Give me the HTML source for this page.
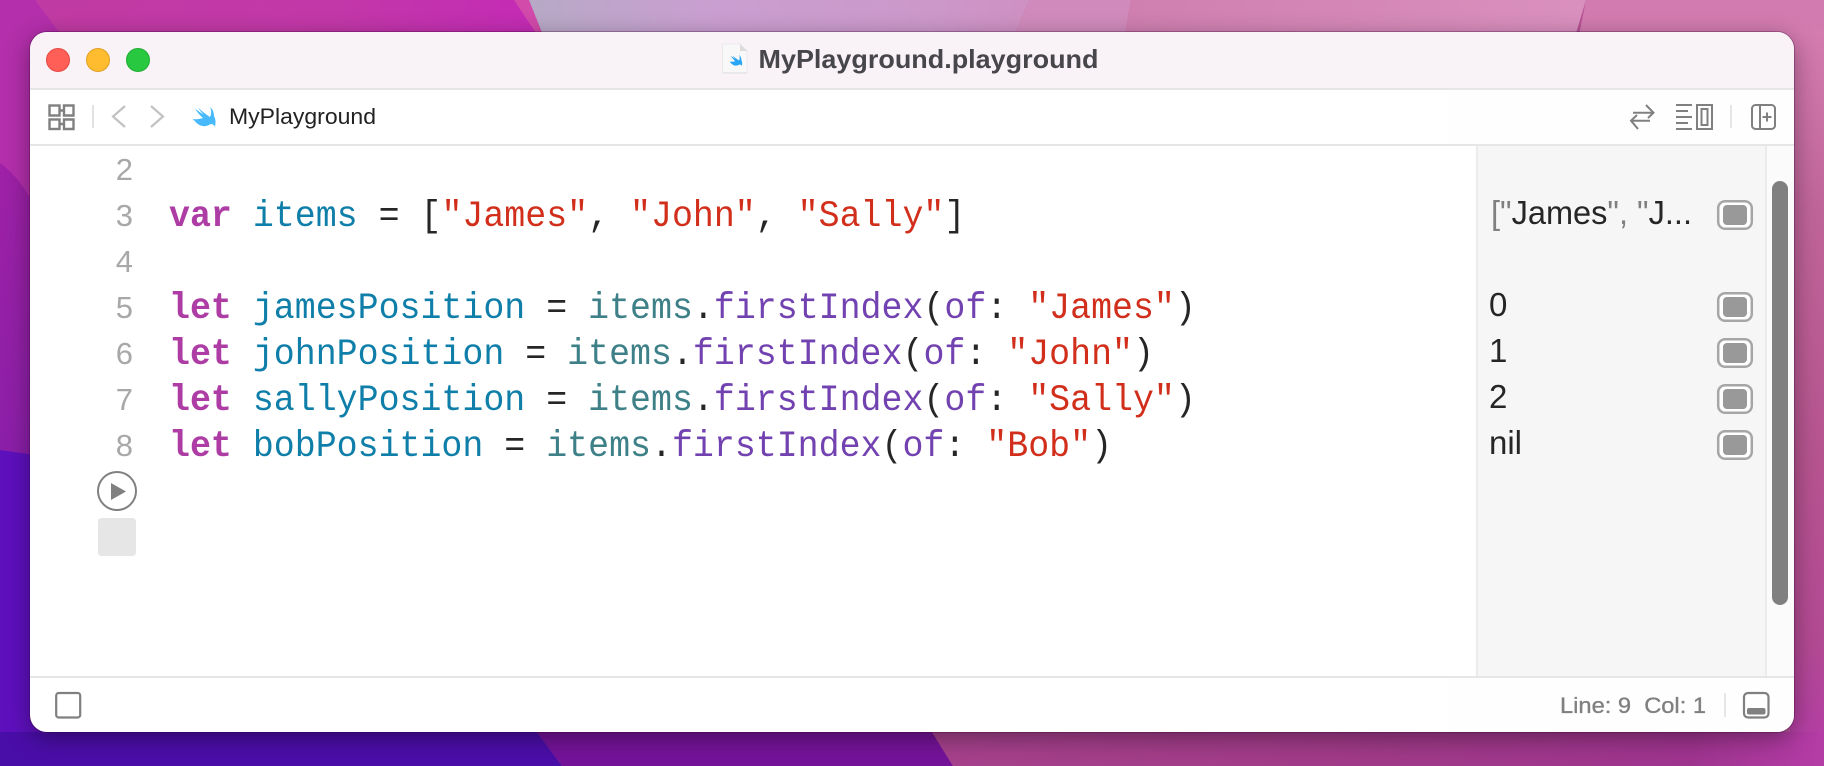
<!DOCTYPE html>
<html><head><meta charset="utf-8"><style>
html,body{margin:0;padding:0;width:1824px;height:766px;overflow:hidden;background:#8a2a90}
svg{position:absolute;left:0;top:0}
#win{position:absolute;left:30px;top:32px;width:1764px;height:700px;border-radius:17px;overflow:hidden;background:#fff;box-shadow:0 0 0 1px rgba(60,0,60,.3),0 6px 24px rgba(0,0,0,.38)}
#win div{position:absolute}
.k{fill:#ad3da4;font-weight:bold}.v{fill:#0f7fa9}.r{fill:#3e8087}.m{fill:#7242b0}.s{fill:#d12f1b}
</style></head><body>
<svg width="1824" height="766" viewBox="0 0 1824 766">
<defs>
<linearGradient id="a" x1="0" x2="1" y1="0" y2="0"><stop offset="0" stop-color="#c03ba2"/><stop offset=".6" stop-color="#c238a8"/><stop offset="1" stop-color="#c42ab6"/></linearGradient>
<linearGradient id="b" x1="0" x2="1" y1="0" y2="0"><stop offset="0" stop-color="#b7a9c6"/><stop offset=".35" stop-color="#c99fd0"/><stop offset=".8" stop-color="#cc98ca"/><stop offset="1" stop-color="#cf90c2"/></linearGradient>
<linearGradient id="c" x1="0" x2="0" y1="0" y2="1"><stop offset="0" stop-color="#9e21a6"/><stop offset="1" stop-color="#8a1fa8"/></linearGradient>
<linearGradient id="d" x1="0" x2="0" y1="0" y2="1"><stop offset="0" stop-color="#d47cb0"/><stop offset=".25" stop-color="#c0659a"/><stop offset=".6" stop-color="#b65490"/><stop offset=".85" stop-color="#b34a93"/><stop offset="1" stop-color="#b43da6"/></linearGradient>
<linearGradient id="e" x1="0" x2="1" y1="0" y2="0"><stop offset="0" stop-color="#a6418c"/><stop offset=".5" stop-color="#a03a88"/><stop offset=".85" stop-color="#9f348f"/><stop offset="1" stop-color="#b43ca6"/></linearGradient>
<linearGradient id="f" x1="0" x2="1" y1="0" y2="0"><stop offset="0" stop-color="#cf7fb0"/><stop offset="1" stop-color="#da90be"/></linearGradient>
</defs>
<rect width="1824" height="766" fill="#b55295"/>
<polygon points="0,0 520,0 550,40 550,300 0,300" fill="url(#a)"/>
<polygon points="0,0 35,0 62,36 62,210 0,210" fill="#b32fab"/>
<polygon points="514,0 529,0 545,36 538,36" fill="#d24aaa"/>
<polygon points="529,0 1030,0 1012,40 545,40" fill="url(#b)"/>
<polygon points="1030,0 1131,0 1124,40 1012,40" fill="#d08bbc"/>
<polygon points="1131,0 1586,0 1574,40 1124,40" fill="url(#f)"/>
<polygon points="1586,0 1824,0 1824,60 1574,60" fill="#d27bb0"/>
<rect x="1790" y="30" width="34" height="720" fill="url(#d)"/>
<path d="M0 163C10 170 22 183 30 198L70 198V470H0Z" fill="url(#c)"/>
<polygon points="0,450 70,460 70,766 0,766" fill="#5e10bd"/>
<polygon points="0,732 537,732 562,766 0,766" fill="#4a0ea8"/>
<polygon points="537,732 932,732 953,766 562,766" fill="#741399"/>
<polygon points="932,732 1824,732 1824,766 953,766" fill="url(#e)"/>
</svg>

<div id="win">
<div style="left:0;top:0;width:1764px;height:56px;background:#f9f3f8"></div>
<div style="left:0;top:56px;width:1764px;height:2px;background:#e6e5e7"></div>
<div style="left:1417px;top:58px;width:347px;height:54px;background:#fefefe"></div>
<div style="left:0;top:112px;width:1764px;height:2px;background:#e6e6e8"></div>
<div style="left:1446px;top:114px;width:290px;height:532px;background:#f6f6f6"></div>
<div style="left:1446px;top:114px;width:2px;height:532px;background:#ebebeb"></div>
<div style="left:1735px;top:114px;width:2px;height:532px;background:#ebebeb"></div>
<div style="left:1737px;top:114px;width:27px;height:532px;background:#fbfbfb"></div>
<div style="left:1742px;top:149px;width:16px;height:424px;border-radius:8px;background:#808080"></div>
<div style="left:0;top:644px;width:1764px;height:2px;background:#e6e6e6"></div>
<div style="left:1417px;top:646px;width:347px;height:54px;background:#fefefe"></div>
</div>

<svg width="1824" height="766" viewBox="0 0 1824 766" font-family="'Liberation Sans',sans-serif">
<!-- code -->
<g font-family="'Liberation Mono',monospace" font-size="37" fill="#262626">
<text transform="translate(169,226) scale(.944,1)"><tspan class="k">var</tspan> <tspan class="v">items</tspan> = [<tspan class="s">"James"</tspan>, <tspan class="s">"John"</tspan>, <tspan class="s">"Sally"</tspan>]</text>
<text transform="translate(169,318) scale(.944,1)"><tspan class="k">let</tspan> <tspan class="v">jamesPosition</tspan> = <tspan class="r">items</tspan>.<tspan class="m">firstIndex</tspan>(<tspan class="m">of</tspan>: <tspan class="s">"James"</tspan>)</text>
<text transform="translate(169,364) scale(.944,1)"><tspan class="k">let</tspan> <tspan class="v">johnPosition</tspan> = <tspan class="r">items</tspan>.<tspan class="m">firstIndex</tspan>(<tspan class="m">of</tspan>: <tspan class="s">"John"</tspan>)</text>
<text transform="translate(169,410) scale(.944,1)"><tspan class="k">let</tspan> <tspan class="v">sallyPosition</tspan> = <tspan class="r">items</tspan>.<tspan class="m">firstIndex</tspan>(<tspan class="m">of</tspan>: <tspan class="s">"Sally"</tspan>)</text>
<text transform="translate(169,456) scale(.944,1)"><tspan class="k">let</tspan> <tspan class="v">bobPosition</tspan> = <tspan class="r">items</tspan>.<tspan class="m">firstIndex</tspan>(<tspan class="m">of</tspan>: <tspan class="s">"Bob"</tspan>)</text>
</g>
<!-- traffic lights -->
<circle cx="58" cy="60" r="11.5" fill="#ff5f57" stroke="#e5483f" stroke-width="1"/>
<circle cx="98" cy="60" r="11.5" fill="#febc2e" stroke="#e0a025" stroke-width="1"/>
<circle cx="138" cy="60" r="11.5" fill="#28c840" stroke="#20ad32" stroke-width="1"/>
<!-- document icon -->
<path d="M723 45H740L747 52V73.500H723Z" fill="#dcdcdc"/>
<path d="M722.500 44H740L747 51V72.500H722.500Z" fill="#f8f8f8" stroke="#e6e6e6" stroke-width=".8"/>
<path d="M740 44V51H747Z" fill="#dcdcdc"/>
<path transform="translate(621.500,-5) scale(.56)" d="M193 119C197 124 201 127 206 126C208 125.700 209.500 124.500 211 124C212.500 124 214 125 215 126.500C216 122 215.500 118.500 214 116C214 112 212.500 109 210 107C211.500 110 211.500 114 210 117C206 114.500 201 110.500 198 107.500C199.500 110 201.500 112.500 203.500 114.500C201 113 197.500 110.500 195 108.500C197 112 200 115.500 203 118C200 119 196 119.500 193 119Z" fill="#29a5f5"/>
<text x="758.500" y="68" font-size="26" font-weight="bold" fill="#47464a" textLength="340" lengthAdjust="spacingAndGlyphs">MyPlayground.playground</text>
<!-- grid icon -->
<g fill="none" stroke="#808080" stroke-width="2.400">
<rect x="49.500" y="105.500" width="10" height="10"/>
<path d="M64 110.500H60M64 105.500H73.500V115.500H64Z"/>
<rect x="49.500" y="119.500" width="10" height="9.500"/>
<path d="M64 124H60M64 119.500H73.500V129H64Z"/>
</g>
<rect x="92" y="105" width="2" height="23" fill="#e2e2e2"/>
<path d="M125 106L113 116.500L125 127" fill="none" stroke="#c2c2c2" stroke-width="2.200"/>
<path d="M151 106L163 116.500L151 127" fill="none" stroke="#c2c2c2" stroke-width="2.200"/>
<path d="M193 119C197 124 201 127 206 126C208 125.700 209.500 124.500 211 124C212.500 124 214 125 215 126.500C216 122 215.500 118.500 214 116C214 112 212.500 109 210 107C211.500 110 211.500 114 210 117C206 114.500 201 110.500 198 107.500C199.500 110 201.500 112.500 203.500 114.500C201 113 197.500 110.500 195 108.500C197 112 200 115.500 203 118C200 119 196 119.500 193 119Z" fill="#48bafc"/>
<text x="229" y="124" font-size="22" fill="#222" textLength="147" lengthAdjust="spacingAndGlyphs">MyPlayground</text>
<!-- right toolbar -->
<g fill="none" stroke="#808080" stroke-width="2">
<path d="M1633 112.700H1653M1646 105L1653.500 112.700L1648 118"/>
<path d="M1632 120.700H1650M1637 115L1631 120.700L1638 129"/>
<path d="M1676 105H1692M1676 111H1688M1676 117H1692M1676 123H1688M1676 129H1692"/>
<rect x="1697" y="105" width="15" height="24"/>
<rect x="1701.500" y="109" width="6" height="16"/>
<rect x="1752" y="105" width="23" height="24" rx="3.500"/>
<path d="M1760 105V129M1767 112.500V121.500M1762.500 117H1771.500"/>
</g>
<rect x="1730" y="105" width="2" height="23" fill="#e6e6e6"/>
<!-- line numbers -->
<g font-size="31" fill="#a8a8a8" text-anchor="end">
<text x="133" y="180">2</text><text x="133" y="226">3</text><text x="133" y="272">4</text><text x="133" y="318">5</text><text x="133" y="364">6</text><text x="133" y="410">7</text><text x="133" y="456">8</text>
</g>
<circle cx="117" cy="491" r="19" fill="#fff" stroke="#808080" stroke-width="2"/>
<path d="M111 483L126 491.500L111 500Z" fill="#808080"/>
<rect x="98" y="518" width="38" height="38" rx="3.500" fill="#e6e6e6"/>
<!-- results -->
<text x="1491" y="224" font-size="33" fill="#262626" textLength="201" lengthAdjust="spacingAndGlyphs"><tspan fill="#808080">["</tspan>James<tspan fill="#808080">", "</tspan>J...</text>
<g font-size="33" fill="#262626">
<text x="1489" y="316">0</text><text x="1489" y="362">1</text><text x="1489" y="408">2</text><text x="1489" y="454">nil</text>
</g>
<g>
<rect x="1718.200" y="201.200" width="33.600" height="27.600" rx="7" fill="#fff" stroke="#a6a6a6" stroke-width="2.500"/><rect x="1723" y="205" width="24" height="20" rx="4" fill="#999"/>
<rect x="1718.200" y="293.200" width="33.600" height="27.600" rx="7" fill="#fff" stroke="#a6a6a6" stroke-width="2.500"/><rect x="1723" y="297" width="24" height="20" rx="4" fill="#999"/>
<rect x="1718.200" y="339.200" width="33.600" height="27.600" rx="7" fill="#fff" stroke="#a6a6a6" stroke-width="2.500"/><rect x="1723" y="343" width="24" height="20" rx="4" fill="#999"/>
<rect x="1718.200" y="385.200" width="33.600" height="27.600" rx="7" fill="#fff" stroke="#a6a6a6" stroke-width="2.500"/><rect x="1723" y="389" width="24" height="20" rx="4" fill="#999"/>
<rect x="1718.200" y="431.200" width="33.600" height="27.600" rx="7" fill="#fff" stroke="#a6a6a6" stroke-width="2.500"/><rect x="1723" y="435" width="24" height="20" rx="4" fill="#999"/>
</g>
<!-- status -->
<rect x="56.200" y="693" width="24" height="24.500" rx="2.500" fill="none" stroke="#808080" stroke-width="2.200"/>
<text x="1560" y="713" font-size="22" fill="#808080" stroke="#808080" stroke-width=".35" textLength="146" lengthAdjust="spacingAndGlyphs" xml:space="preserve">Line: 9  Col: 1</text>
<rect x="1724" y="693" width="2" height="24" fill="#e6e6e6"/>
<rect x="1744" y="693" width="24.500" height="24.500" rx="4" fill="none" stroke="#808080" stroke-width="2.200"/>
<rect x="1747" y="708" width="18.500" height="6.500" rx="2" fill="#808080"/>
</svg>
</body></html>
